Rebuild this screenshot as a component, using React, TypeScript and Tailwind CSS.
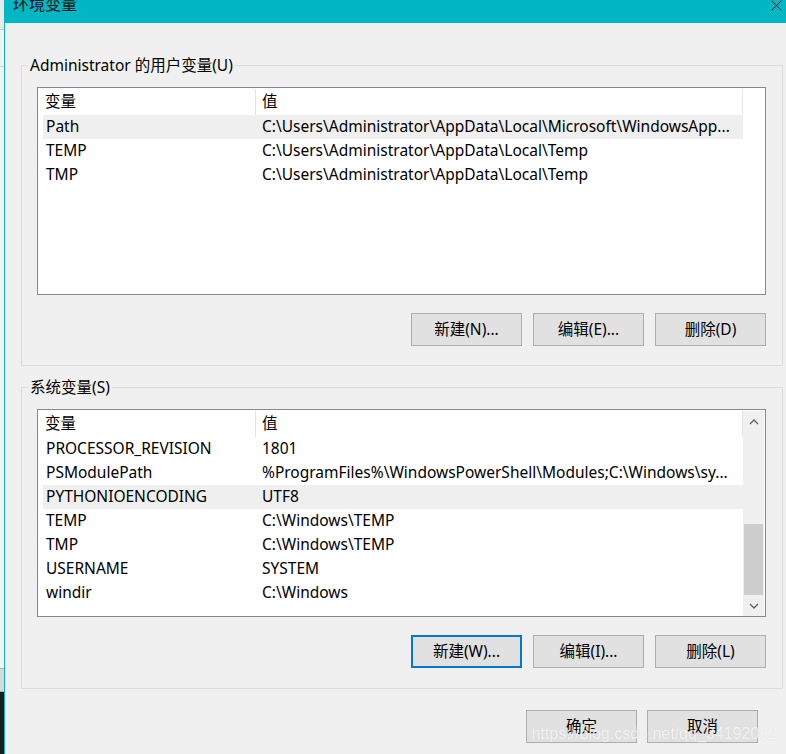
import React from "react";

type Row = [string, string];

const userVars: Row[] = [
    ["Path", "C:\\Users\\Administrator\\AppData\\Local\\Microsoft\\WindowsApp..."],
    ["TEMP", "C:\\Users\\Administrator\\AppData\\Local\\Temp"],
    ["TMP", "C:\\Users\\Administrator\\AppData\\Local\\Temp"],
];

const sysVars: Row[] = [
    ["PROCESSOR_REVISION", "1801"],
    ["PSModulePath", "%ProgramFiles%\\WindowsPowerShell\\Modules;C:\\Windows\\sy..."],
    ["PYTHONIOENCODING", "UTF8"],
    ["TEMP", "C:\\Windows\\TEMP"],
    ["TMP", "C:\\Windows\\TEMP"],
    ["USERNAME", "SYSTEM"],
    ["windir", "C:\\Windows"],
];

const Chevron = ({ up }: { up?: boolean }) => (
    <svg width="10" height="6" viewBox="0 0 10 6">
        <polyline
            points={up ? "1,5 5,1 9,5" : "1,1 5,5 9,1"}
            fill="none"
            stroke="#606060"
            strokeWidth="1.3"
        />
    </svg>
);

const VarList = ({ rows, active, scroll }: { rows: Row[]; active: number; scroll?: boolean }) => {
    return (
        <div className="w-[729px] h-[208px] border border-[#828790] bg-white flex">
            <div className="w-[705px] flex flex-col">
                <div className="flex h-[27px] shrink-0">
                    <div className="w-[217px] pl-[7px] flex items-center">变量</div>
                    <div className="w-px mt-px bg-[#e5e5e5]"></div>
                    <div className="w-[486px] pl-[6px] flex items-center">值</div>
                    <div className="w-px mt-px bg-[#e5e5e5]"></div>
                </div>
                {rows.map((r, i) => (
                    <div
                        key={r[0] + i}
                        className={"ml-[5px] w-[700px] h-[24px] shrink-0 flex items-center whitespace-nowrap " + (i === active ? "bg-[#efefef]" : "")}
                    >
                        <div className="w-[219px] pl-[3px]">{r[0]}</div>
                        <div>{r[1]}</div>
                    </div>
                ))}
            </div>
            {scroll && (
                <div className="w-[21px] mt-px bg-[#f0f0f0] flex flex-col">
                    <div className="h-[21px] flex items-center justify-center">
                        <Chevron up />
                    </div>
                    <div className="flex-1 flex flex-col justify-end px-px">
                        <div className="h-[71px] bg-[#cdcdcd]"></div>
                    </div>
                    <div className="h-[21px] flex items-center justify-center">
                        <Chevron />
                    </div>
                </div>
            )}
        </div>
    );
};

const Btn = ({ label, focused }: { label: string; focused?: boolean }) => (
    <button
        className={
            "w-[111px] h-[33px] bg-[#e1e1e1] text-black flex items-center justify-center " +
            (focused ? "border-2 border-[#0078d7]" : "border border-[#adadad]")
        }
    >
        {label}
    </button>
);

const App = () => {
    return (
        <div className="relative w-[786px] h-[754px] overflow-hidden flex bg-[#f0f0f0] text-black text-[15.5px] font-['Noto_Sans','Noto_Sans_CJK_SC',sans-serif]">
            {/* window behind, peeking on the left */}
            <div className="w-[4px] flex flex-col">
                <div className="h-[30px] bg-[#e9e9e9] border-b border-[#c8c8c8]"></div>
                <div className="h-[37px] bg-[#f2f2f2] border-b border-[#d0d0d0]"></div>
                <div className="flex-1 bg-[#f4f4f4]"></div>
                <div className="h-[24px] bg-[#d8d8d8] border-y border-[#b0b0b0]"></div>
                <div className="h-[62px] bg-[#1c1c1c]"></div>
            </div>

            <div className="flex-1 border-l border-[#00b7c3] flex flex-col">
                <div className="h-[23px] bg-[#00b7c3] flex items-start shrink-0">
                    <div className="pl-[8px] -mt-[4px] leading-none text-[16px] text-[#111]">环境变量</div>
                    <svg className="ml-auto mr-[4px]" width="11" height="11" viewBox="0 0 11 11">
                        <path d="M0.5 0.5 L10.5 10.5 M10.5 0.5 L0.5 10.5" stroke="#111" strokeWidth="1" />
                    </svg>
                </div>

                <fieldset className="ml-[16px] mt-[32px] w-[761px] border border-[#dcdcdc] pl-[6px] pr-[16px] pb-[19px]">
                    <legend className="px-[2px] leading-[20px]">Administrator 的用户变量(U)</legend>
                    <div className="ml-[9px] mt-[12px]">
                        <VarList rows={userVars} active={0} />
                    </div>
                    <div className="mt-[18px] flex justify-end gap-[11px]">
                        <Btn label="新建(N)..." />
                        <Btn label="编辑(E)..." />
                        <Btn label="删除(D)" />
                    </div>
                </fieldset>

                <fieldset className="ml-[16px] mt-[11px] w-[761px] border border-[#dcdcdc] pl-[6px] pr-[16px] pb-[20px]">
                    <legend className="px-[2px] leading-[20px]">系统变量(S)</legend>
                    <div className="ml-[9px] mt-[12px]">
                        <VarList rows={sysVars} active={2} scroll />
                    </div>
                    <div className="mt-[18px] flex justify-end gap-[11px]">
                        <Btn label="新建(W)..." focused />
                        <Btn label="编辑(I)..." />
                        <Btn label="删除(L)" />
                    </div>
                </fieldset>

                <div className="mt-[21px] pr-[28px] flex justify-end gap-[10px]">
                    <Btn label="确定" />
                    <Btn label="取消" />
                </div>
            </div>

            <div className="absolute right-[9px] bottom-[8px] text-[16px] text-white/80 font-['Liberation_Sans',sans-serif] [text-shadow:0_0_1px_rgba(0,0,0,0.15)]">
                https://blog.csdn.net/qq_34192032
            </div>
        </div>
    );
};

export default App;
